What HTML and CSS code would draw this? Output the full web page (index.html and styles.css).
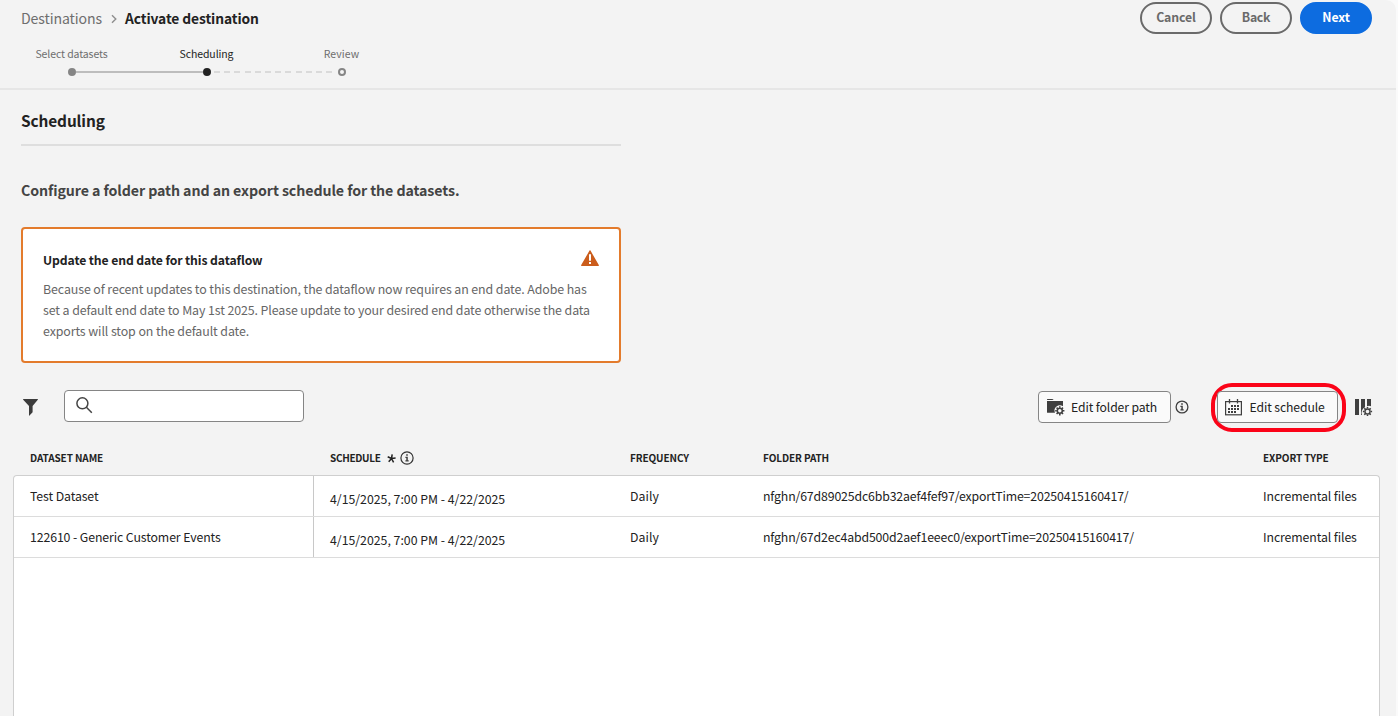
FILE: index.html
```
<!DOCTYPE html>
<html lang="en">
<head>
<meta charset="utf-8">
<title>Activate destination</title>
<link rel="stylesheet" href="styles.css">
</head>
<body>
<div class="app">
  <header class="header">
    <div class="header-left">
      <nav class="crumbs">
        <span class="crumb">Destinations</span>
        <svg class="chevron" width="6" height="10" viewBox="0 0 6 10"><path d="M1 1.2 4.8 5 1 8.8" fill="none" stroke="#8e8e8e" stroke-width="1.4"/></svg>
        <span class="crumb-current">Activate destination</span>
      </nav>
      <ol class="steps">
        <li class="step done"><span class="step-label">Select datasets</span><i class="dot"></i></li>
        <li class="step current"><span class="step-label">Scheduling</span><i class="dot"></i></li>
        <li class="step upcoming"><span class="step-label">Review</span><i class="dot"></i></li>
      </ol>
    </div>
    <div class="header-actions">
      <button class="pill">Cancel</button>
      <button class="pill pill-tight">Back</button>
      <button class="pill pill-cta">Next</button>
    </div>
  </header>
  <main class="main">
    <h1 class="title">Scheduling</h1>
    <p class="subtitle">Configure a folder path and an export schedule for the datasets.</p>
    <section class="alert">
      <div class="alert-head">
        <h2 class="alert-title">Update the end date for this dataflow</h2>
        <svg class="alert-icon" width="18" height="16" viewBox="0 0 18 16"><path d="M8.5.6a.6.6 0 0 1 1 0l8.3 14.5a.6.6 0 0 1-.5.9H.7a.6.6 0 0 1-.5-.9z" fill="#cb5d1c"/><path d="M8 4.2h2v6.6H8zM8 12h2v2H8z" fill="#fff"/></svg>
      </div>
      <p class="alert-body">Because of recent updates to this destination, the dataflow now requires an end date. Adobe has<br>set a default end date to May 1st 2025. Please update to your desired end date otherwise the data<br>exports will stop on the default date.</p>
    </section>
    <div class="toolbar">
      <svg class="filter-icon" width="15" height="17" viewBox="0 0 15 17"><path d="M.5 0h14a.4.4 0 0 1 .3.7L9.6 7v6.200L6.500 16.600a.3.3 0 0 1-.5-.2V7L.2.7A.4.4 0 0 1 .5 0z" fill="#3b3b3b"/></svg>
      <div class="search"><svg width="17" height="17" viewBox="0 0 17 17"><g fill="none" stroke="#444" stroke-width="1.5"><circle cx="6.4" cy="6.3" r="5.5"/><path d="M10.4 10.3 15.8 15.7"/></g></svg></div>
      <div class="tools">
        <button class="btn btn-folder">
          <svg width="18" height="18" viewBox="0 0 18 18"><path d="M0 1.400Q0 .9.5.9H5.400l1.300 1.200H0zM0 3H16v5.200A5.400 5.400 0 0 0 8 14.800H.5Q0 14.800 0 14.300z" fill="#3f3f3f"/><g transform="translate(12.800 12.800)" stroke="#3f3f3f" fill="none"><circle r="2.500" stroke-width="1.500"/><path d="M0-4.600V-3M0 3V4.600M-4.600 0H-3M3 0H4.600M-3.200-3.200-2.100-2.100M2.100 2.100 3.200 3.200M-3.200 3.200-2.100 2.100M2.100-2.100 3.200-3.200" stroke-width="1.600"/></g></svg>
          <span>Edit folder path</span>
        </button>
        <svg class="info info-tool" width="14" height="14" viewBox="0 0 14 14"><circle cx="7" cy="7" r="5.900" fill="none" stroke="#3f3f3f" stroke-width="1.300"/><path d="M6.200 3.300h1.600v1.500H6.200zM5.400 5.800h2.400v3.500h.9v1.100H5.400V9.300h.9V6.900h-.9z" fill="#3f3f3f"/></svg>
        <div class="highlight">
          <button class="btn btn-schedule">
            <svg width="18" height="17" viewBox="0 0 18 17"><rect x=".6" y="2.600" width="15.800" height="13.200" fill="none" stroke="#3f3f3f" stroke-width="1.200"/><path d="M4.500 0V4.500M12.500 0V4.500" stroke="#3f3f3f" stroke-width="1.300"/><path d="M6 7H14M3 10H14M3 13H11" stroke="#3f3f3f" stroke-width="2" stroke-dasharray="2 1"/></svg>
            <span>Edit schedule</span>
          </button>
        </div>
        <svg class="columns" width="18" height="18" viewBox="0 0 18 18"><path d="M0 0H4V16H0zM6 0H10V8.300A6 6 0 0 0 7 16H6zM12 0H16V7.200A6 6 0 0 0 12 7.200z" fill="#3f3f3f"/><g transform="translate(12.500 12.500)" stroke="#3f3f3f" fill="none"><circle r="2.500" stroke-width="1.400"/><path d="M0-4.600V-3M0 3V4.600M-4.600 0H-3M3 0H4.600M-3.200-3.200-2.100-2.100M2.100 2.100 3.200 3.200M-3.200 3.200-2.100 2.100M2.100-2.100 3.200-3.200" stroke-width="1.500"/></g></svg>
      </div>
    </div>
    <div class="grid head">
      <div class="cell">DATASET NAME</div>
      <div class="cell"><span class="head-tight">SCHEDULE</span>
        <svg class="star" width="9" height="9" viewBox="0 0 9 9"><path d="M4.500 4.500 5.200.4M4.500 4.500 8.600 4M4.500 4.500 6.600 8.300M4.500 4.500 1.700 7.700M4.500 4.500.7 2.800" stroke="#222" stroke-width="1.500"/></svg>
        <svg class="info" width="14" height="14" viewBox="0 0 14 14"><circle cx="7" cy="7" r="6.100" fill="none" stroke="#333" stroke-width="1.200"/><path d="M6.200 3.300h1.600v1.500H6.200zM5.400 5.800h2.400v3.500h.9v1.100H5.400V9.300h.9V6.900h-.9z" fill="#3f3f3f"/></svg>
      </div>
      <div class="cell">FREQUENCY</div>
      <div class="cell">FOLDER PATH</div>
      <div class="cell">EXPORT TYPE</div>
    </div>
    <div class="table">
      <div class="grid row">
        <div class="cell name">Test Dataset</div>
        <div class="cell when">4/15/2025, 7:00 PM - 4/22/2025</div>
        <div class="cell freq">Daily</div>
        <div class="cell path">nfghn/67d89025dc6bb32aef4fef97/exportTime=20250415160417/</div>
        <div class="cell">Incremental files</div>
      </div>
      <div class="grid row">
        <div class="cell name">122610 - Generic Customer Events</div>
        <div class="cell when">4/15/2025, 7:00 PM - 4/22/2025</div>
        <div class="cell freq">Daily</div>
        <div class="cell path">nfghn/67d2ec4abd500d2aef1eeec0/exportTime=20250415160417/</div>
        <div class="cell">Incremental files</div>
      </div>
    </div>
  </main>
</div>
</body>
</html>
```
FILE: styles.css
```
* { box-sizing: border-box; }
body {
  margin: 0;
  height: 716px;
  overflow: hidden;
  background: #fafafa;
  color: #222;
  font-family: "Noto Sans CJK SC", "Noto Sans", sans-serif;
  font-size: 12.3px;
  line-height: 20px;
  letter-spacing: -0.1px;
  white-space: nowrap;
}
h1, h2, p, ol { margin: 0; padding: 0; }
svg { display: block; flex: none; }
button { font: inherit; color: inherit; letter-spacing: inherit; cursor: pointer; }

.app {
  width: 1396px;
  height: 716px;
  display: flex;
  flex-direction: column;
  background: #f3f3f3;
  border-top-right-radius: 10px;
}

.header {
  flex: none;
  height: 90px;
  display: flex;
  justify-content: space-between;
  padding: 2px 24px 0 21px;
  border-bottom: 2px solid #e6e6e6;
}
.crumbs { display: flex; align-items: center; height: 34px; line-height: 32px; padding-bottom: 2px; }
.crumb { color: #6e6e6e; font-size: 14.1px; }
.chevron { margin: 2px 8px 0 9px; }
.crumb-current { font-weight: 700; font-size: 13.8px; }

.steps { display: flex; list-style: none; margin: 9px 0 0 -17px; }
.step {
  width: 135px;
  display: flex;
  flex-direction: column;
  align-items: center;
  font-size: 10.5px;
  line-height: 18px;
  color: #6e6e6e;
  position: relative;
}
.upcoming { letter-spacing: 0.1px; }
.step + .step::before {
  content: "";
  position: absolute;
  top: 26px;
  left: -60px;
  width: 120px;
  height: 2px;
  background: repeating-linear-gradient(90deg, #dadada 0 6px, transparent 6px 10.2px);
}
.step.current::before { left: -63px; width: 127px; background: #bdbdbd; }
.dot { width: 8px; height: 8px; margin-top: 5px; border-radius: 50%; border: 2px solid #858585; }
.done .dot { background: #858585; }
.current { color: #222; }
.current .dot { background: #222; border-color: #222; }

.header-actions { display: flex; gap: 8px; }
.pill {
  width: 72px;
  height: 32px;
  padding: 0 0 2px;
  border: 2px solid #6a6a6a;
  border-radius: 16px;
  background: none;
  color: #6a6a6a;
  font-weight: 700;
}
.pill-tight { letter-spacing: -0.3px; }
.pill-cta { background: #0d6ce0; border-color: #0d6ce0; color: #fff; }

.main { flex: 1; display: flex; flex-direction: column; min-height: 0; }
.title {
  width: 600px;
  height: 56px;
  margin-left: 21px;
  padding-top: 18px;
  border-bottom: 2px solid #dedede;
  font-size: 15.4px;
  line-height: 24px;
}
.subtitle { margin: 32px 0 0 21px; color: #444; font-size: 14.2px; line-height: 24px; font-weight: 700; letter-spacing: -0.08px; }
.alert {
  width: 600px;
  height: 136px;
  margin: 25px 0 0 21px;
  padding: 20px;
  background: #fff;
  border: 2px solid #e37b2c;
  border-radius: 4px;
}
.alert-head { display: flex; justify-content: space-between; height: 30px; }
.alert-title { font-size: 12.2px; line-height: 22px; }
.alert-icon { margin: 1px 0 0; }
.alert-body { color: #666; font-size: 12.4px; line-height: 21px; }

.toolbar { display: flex; align-items: flex-start; margin-top: 20px; padding: 0 23px; height: 60px; }
.filter-icon { margin-top: 16px; }
.search {
  width: 240px;
  height: 32px;
  margin: 7px 0 0 26px;
  padding: 6px 11px;
  background: #fff;
  border: 1px solid #858585;
  border-radius: 4px;
}
.tools { display: flex; align-items: flex-start; margin-left: auto; }
.btn {
  height: 32px;
  display: flex;
  align-items: center;
  padding: 0;
  background: #fafafa;
  border: 1px solid #858585;
  border-radius: 4px;
  font-size: 12.2px;
}
.btn-folder { width: 133px; margin-top: 8px; padding-left: 8px; gap: 6px; }
.info-tool { margin: 17px 22px 0 4px; }
.highlight { width: 135px; height: 49px; padding: 4px 2px; border: 4px solid #fb0318; border-radius: 21px; }
.btn-schedule { width: 121px; padding-left: 7px; gap: 6.5px; }
.columns { margin: 16px 0 0 9px; }

.grid { display: grid; grid-template-columns: 300px 300px 133px 500px 1fr; }
.cell { padding-left: 16px; display: flex; }
.head { flex: none; margin-left: 14px; height: 32px; font-size: 10px; font-weight: 700; line-height: 30px; }
.head-tight { letter-spacing: -0.32px; }
.star { margin: 11px 4px 0 6px; }
.head .info { margin-top: 8px; }
.table {
  flex: 1;
  min-height: 0;
  width: 1367px;
  margin-left: 13px;
  background: #fff;
  border: 1px solid #cfcfcf;
  border-bottom: 0;
  border-radius: 4px 4px 0 0;
}
.row { height: 41px; line-height: 40px; border-bottom: 1px solid #dcdcdc; }
.name { border-right: 1px solid #c8c8c8; }
.when { line-height: 46px; letter-spacing: 0; height: 40px; }
.freq { letter-spacing: 0.05px; }
.path { letter-spacing: -0.14px; }
```
